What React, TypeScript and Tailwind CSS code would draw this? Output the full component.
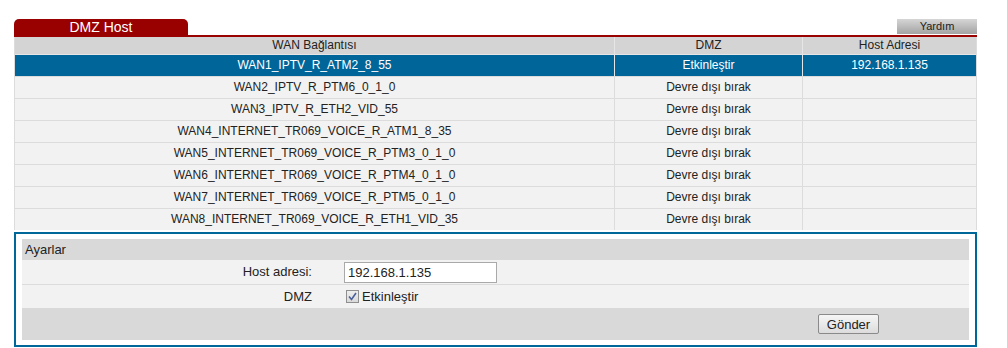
import React from "react";

const rows = [
  { wan: "WAN1_IPTV_R_ATM2_8_55", dmz: "Etkinleştir", host: "192.168.1.135", active: true },
  { wan: "WAN2_IPTV_R_PTM6_0_1_0", dmz: "Devre dışı bırak", host: "" },
  { wan: "WAN3_IPTV_R_ETH2_VID_55", dmz: "Devre dışı bırak", host: "" },
  { wan: "WAN4_INTERNET_TR069_VOICE_R_ATM1_8_35", dmz: "Devre dışı bırak", host: "" },
  { wan: "WAN5_INTERNET_TR069_VOICE_R_PTM3_0_1_0", dmz: "Devre dışı bırak", host: "" },
  { wan: "WAN6_INTERNET_TR069_VOICE_R_PTM4_0_1_0", dmz: "Devre dışı bırak", host: "" },
  { wan: "WAN7_INTERNET_TR069_VOICE_R_PTM5_0_1_0", dmz: "Devre dışı bırak", host: "" },
  { wan: "WAN8_INTERNET_TR069_VOICE_R_ETH1_VID_35", dmz: "Devre dışı bırak", host: "" },
];

export default function App() {
  return (
    <div className="h-[348px] w-[1007px] bg-white font-['Liberation_Sans',Arial,sans-serif] text-[#222]">
      <div className="ml-[14px] w-[963px] pt-[19px]">
        {/* tab bar */}
        <div className="flex items-end justify-between">
          <div className="flex h-[16px] w-[174px] items-center justify-center rounded-t-[5px] bg-[#990000] text-[14px] leading-none text-white">
            DMZ Host
          </div>
          <div className="mb-[1px] flex h-[15px] w-[80px] items-center justify-center bg-gradient-to-b from-[#d6d6d6] to-[#a3a3a3] text-[11px] leading-none text-[#222]">
            Yardım
          </div>
        </div>
        <div className="h-[2px] bg-[#990000]" />

        {/* WAN table */}
        <div className="border-x border-[#dcdcdc] text-[12px]">
          <div className="flex h-[17px] bg-[#d4d4d4] leading-[17px]">
            <div className="w-[599px] text-center">WAN Bağlantısı</div>
            <div className="w-[188px] border-l border-[#e6e6e6] text-center">DMZ</div>
            <div className="flex-1 border-l border-[#e6e6e6] text-center">Host Adresi</div>
          </div>
          {rows.map((r) => (
            <div
              key={r.wan}
              className={
                r.active
                  ? "flex h-[22px] border-t border-[#e6e6e6] bg-[#00669a] leading-[21px] text-white"
                  : "flex h-[22px] border-t border-[#dcdcdc] bg-[#f2f2f2] leading-[21px]"
              }
            >
              <div className="w-[599px] text-center">{r.wan}</div>
              <div
                className={
                  r.active
                    ? "w-[188px] border-l border-[#e6e6e6] text-center"
                    : "w-[188px] border-l border-[#dcdcdc] text-center"
                }
              >
                {r.dmz}
              </div>
              <div
                className={
                  r.active
                    ? "flex-1 border-l border-[#e6e6e6] text-center"
                    : "flex-1 border-l border-[#dcdcdc] text-center"
                }
              >
                {r.host}
              </div>
            </div>
          ))}
        </div>

        {/* settings */}
        <div className="mt-[2px] border-2 border-[#00679b] px-[6px] py-[5px] text-[13px]">
          <div className="h-[21px] bg-[#d9d9d9] pl-[3px] leading-[21px]">Ayarlar</div>
          <div className="flex h-[25px] items-center border-b border-[#dcdcdc] bg-[#f2f2f2]">
            <div className="w-[290px] text-right">Host adresi:</div>
            <input
              className="ml-[32px] h-[21px] w-[153px] border border-[#a9a9a9] bg-white px-[3px] text-[13px] text-[#222] outline-none"
              defaultValue="192.168.1.135"
            />
          </div>
          <div className="flex h-[23px] items-center bg-[#f2f2f2]">
            <div className="w-[290px] text-right">DMZ</div>
            <span className="ml-[34px] flex h-[13px] w-[13px] items-center justify-center border border-[#8f8f8f] bg-gradient-to-b from-[#eeeeee] to-[#dadada]">
              <svg width="9" height="9" viewBox="0 0 9 9">
                <path d="M1 4.5 L3.5 7.5 L8 1" fill="none" stroke="#4b5f9a" strokeWidth="1.6" />
              </svg>
            </span>
            <span className="ml-[3px]">Etkinleştir</span>
          </div>
          <div className="flex h-[32px] items-start justify-end bg-[#d9d9d9] pr-[90px] pt-[6px]">
            <button className="h-[20px] w-[61px] rounded-[2px] border border-[#8a8a8a] bg-gradient-to-b from-[#f6f6f6] to-[#dcdcdc] text-[13px] leading-none text-[#222]">
              Gönder
            </button>
          </div>
        </div>
      </div>
    </div>
  );
}
